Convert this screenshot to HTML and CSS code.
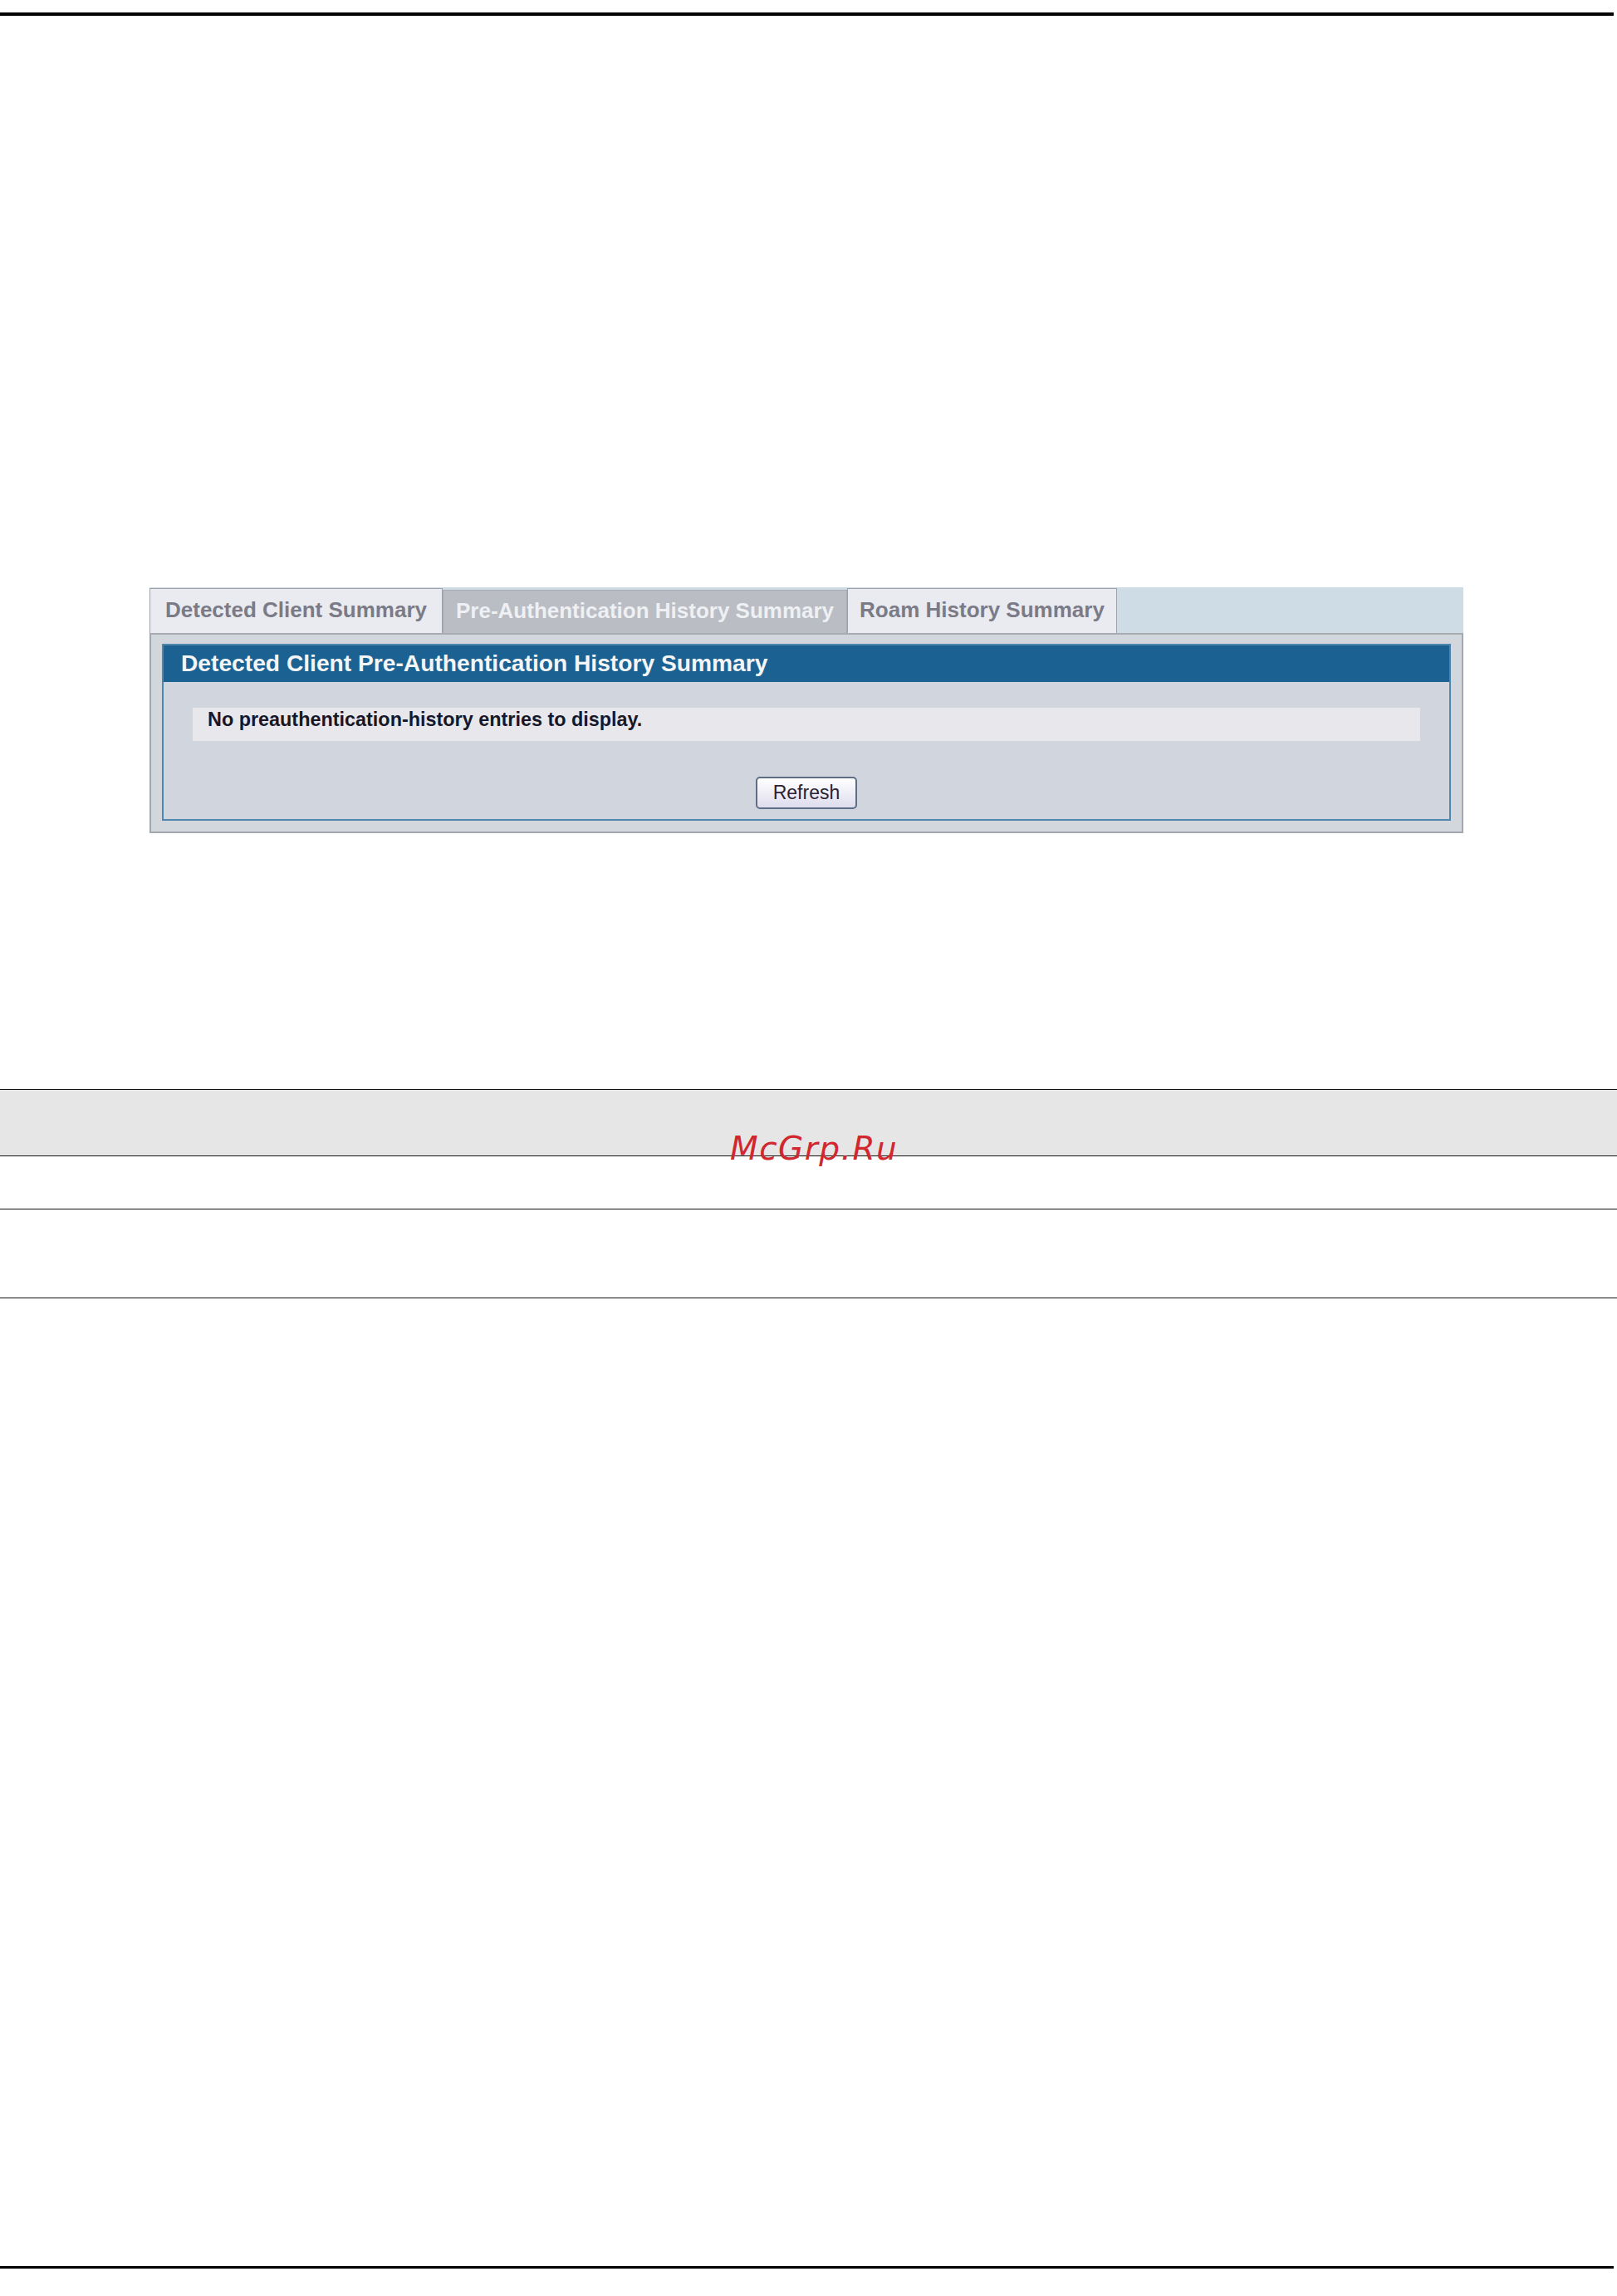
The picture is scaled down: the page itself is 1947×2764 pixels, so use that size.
FILE: index.html
```html
<!DOCTYPE html>
<html>
<head>
<meta charset="utf-8">
<title>Detected Client Pre-Authentication History Summary</title>
<link rel="stylesheet" href="styles.css">
</head>
<body>
<div class="page">
  <div class="rule-top"></div>

  <div class="figure">
    <div class="tabbar">
      <div class="tab tab-first">Detected Client Summary</div>
      <div class="tab tab-active">Pre-Authentication History Summary</div>
      <div class="tab tab-last">Roam History Summary</div>
    </div>
    <div class="panel">
      <div class="box">
        <div class="box-head">Detected Client Pre-Authentication History Summary</div>
        <div class="box-body">
          <div class="msg">No preauthentication-history entries to display.</div>
          <div class="actions"><button class="btn" type="button">Refresh</button></div>
        </div>
      </div>
    </div>
  </div>

  <div class="table">
    <div class="row row-head"></div>
    <div class="row row-a"></div>
    <div class="row row-b"></div>
  </div>

  <div class="rule-bottom"></div>

  <div class="watermark">McGrp.Ru</div>
</div>
</body>
</html>
```

FILE: styles.css
```css
html, body {
  margin: 0;
  padding: 0;
  background: #ffffff;
}

.page {
  position: relative;
  width: 1947px;
  height: 2764px;
  font-family: "Liberation Sans", Arial, sans-serif;
  overflow: hidden;
}

.rule-top {
  margin-top: 15px;
  width: 1943px;
  height: 4px;
  background: #000000;
}

.figure {
  margin: 688px 0 0 180px;
  width: 1582px;
}

.tabbar {
  display: flex;
  align-items: flex-end;
  height: 55px;
  background: #cedce6;
}

.tab {
  display: flex;
  align-items: center;
  box-sizing: border-box;
  height: 54px;
  padding: 0 15px 2px 15px;
  border: 1px solid #9da1a8;
  border-bottom: none;
  background: #e9ebf0;
  color: #7b7b87;
  font-size: 26px;
  font-weight: bold;
  white-space: nowrap;
}

.tab-first {
  padding: 0 18px 2px 18px;
}

.tab-last {
  padding: 0 14px 2px 14px;
}

.tab-active {
  height: 52px;
  background: #babdc4;
  color: #eef0f3;
  border-color: #a7abb2;
}

.panel {
  box-sizing: border-box;
  height: 241px;
  padding: 11px 13px 0 13px;
  background: #d2d6dd;
  border: 2px solid #a3a7ae;
  border-top-color: #a8acb2;
}

.box {
  box-sizing: border-box;
  height: 213px;
  border: 2px solid #4e86ae;
  background: #d1d5dd;
}

.box-head {
  height: 44px;
  line-height: 42px;
  padding-left: 21px;
  background: #1b6293;
  color: #f3f5f7;
  font-size: 28.2px;
  font-weight: bold;
  white-space: nowrap;
}

.box-body {
  padding: 31px 35px 0 35px;
}

.msg {
  height: 40px;
  line-height: 28px;
  padding-left: 18px;
  background: #e8e7ec;
  color: #17172a;
  font-size: 23.4px;
  font-weight: bold;
  white-space: nowrap;
}

.actions {
  display: flex;
  justify-content: center;
  margin-top: 43px;
}

.btn {
  box-sizing: border-box;
  width: 122px;
  height: 39px;
  padding: 0;
  border: 2px solid #5e6e85;
  border-radius: 5px;
  background: linear-gradient(#ffffff, #dedced);
  color: #2a2232;
  font-family: "Liberation Sans", Arial, sans-serif;
  font-size: 23px;
  line-height: 33px;
}

.table {
  margin-top: 308px;
  width: 1947px;
}

.row {
  box-sizing: border-box;
  border-top: 1px solid #111111;
}

.row-head {
  height: 80px;
  background: #e6e6e6;
}

.row-a {
  height: 64px;
}

.row-b {
  height: 108px;
  border-bottom: 1px solid #111111;
}

.rule-bottom {
  margin-top: 1165px;
  width: 1943px;
  height: 3px;
  background: #000000;
}

.watermark {
  position: absolute;
  left: 879px;
  top: 1363px;
  font-family: "DejaVu Sans", sans-serif;
  font-style: italic;
  font-size: 39px;
  line-height: 39px;
  letter-spacing: 1.5px;
  color: #d0282e;
  white-space: nowrap;
}
```
